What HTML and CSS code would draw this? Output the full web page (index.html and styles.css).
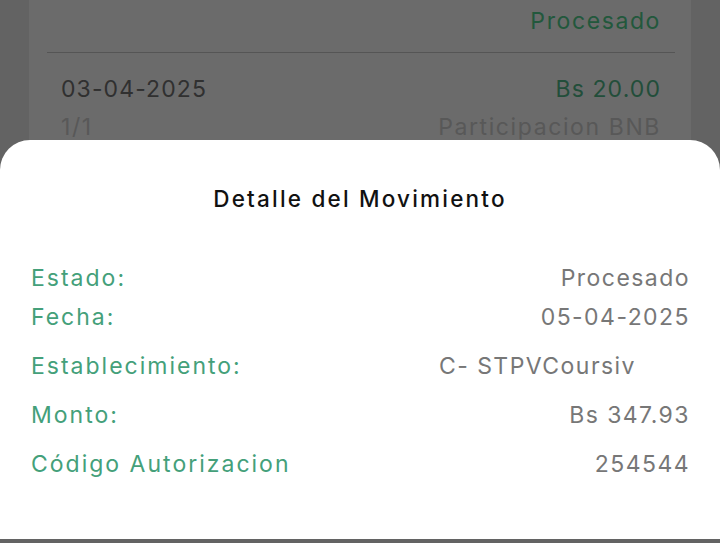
FILE: index.html
```html
<!DOCTYPE html>
<html lang="es">
<head>
  <meta charset="UTF-8" />
  <meta name="viewport" content="width=device-width, initial-scale=1.0" />
  <title>Detalle del Movimiento</title>
  <link rel="stylesheet" href="styles.css">
</head>
<body>
  <div class="backdrop">
    <div class="card">
      <div class="row top">
        <span></span>
        <span class="status">Procesado</span>
      </div>
      <div class="divider"></div>
      <div class="row date-row">
        <span class="date">03-04-2025</span>
        <span class="amount">Bs 20.00</span>
      </div>
      <div class="row sub-row">
        <span>1/1</span>
        <span>Participacion BNB</span>
      </div>
    </div>
  </div>

  <div class="sheet">
    <h2>Detalle del Movimiento</h2>
    <div class="details">
      <div class="item tight">
        <span class="label">Estado:</span>
        <span class="value">Procesado</span>
      </div>
      <div class="item">
        <span class="label">Fecha:</span>
        <span class="value">05-04-2025</span>
      </div>
      <div class="item">
        <span class="label">Establecimiento:</span>
        <span class="value shop">C- STPVCoursiv</span>
      </div>
      <div class="item">
        <span class="label">Monto:</span>
        <span class="value">Bs 347.93</span>
      </div>
      <div class="item">
        <span class="label">Código Autorizacion</span>
        <span class="value">254544</span>
      </div>
    </div>
  </div>
</body>
</html>
```

FILE: styles.css
```css
* { box-sizing: border-box; margin: 0; padding: 0; }
html, body { height: 100%; }
body {
  font-family: Inter, "Noto Sans", sans-serif;
  background: #636363;
  overflow: hidden;
}
.backdrop {
  height: 140px;
  overflow: hidden;
}
.card {
  margin: 0 29px;
  height: 100%;
  background: #6b6b6b;
  padding: 0 30px 0 32px;
  font-size: 23px;
  letter-spacing: 1.6px;
}
.row {
  display: flex;
  justify-content: space-between;
}
.top {
  height: 43px;
  padding-top: 7px;
}
.status { color: #22583c; }
.divider {
  height: 1px;
  background: #555;
  margin: 9px -14px 0 -14px;
}
.date-row {
  margin-top: 22px;
  color: #303030;
  letter-spacing: 1.1px;
}
.amount { color: #224e3a; }
.sub-row {
  margin-top: 10px;
  color: #585858;
}

.sheet {
  height: 399px;
  background: #fff;
  border-radius: 30px 30px 0 0;
  padding-top: 44px;
}
.sheet h2 {
  text-align: center;
  font-size: 22.5px;
  font-weight: 500;
  color: #111;
  letter-spacing: 2.2px;
  line-height: 30px;
}
.details {
  padding: 49px 30px 0 31px;
  font-size: 23px;
  letter-spacing: 2px;
}
.item {
  display: flex;
  justify-content: space-between;
  line-height: 30px;
  margin-bottom: 19px;
}
.item.tight { margin-bottom: 9px; }
.label { color: #44a07a; }
.value { color: #777; letter-spacing: 1.45px; }
.shop { margin-right: 54px; }
```
